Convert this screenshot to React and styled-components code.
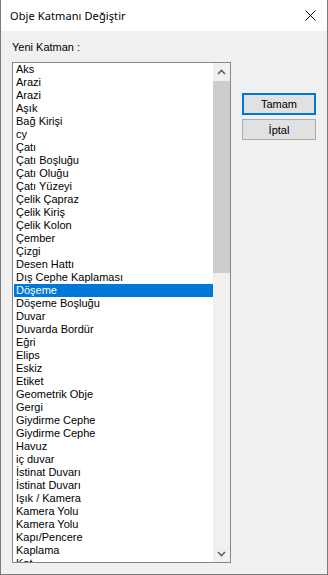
import React from "react"
import styled, { createGlobalStyle } from "styled-components"

const GlobalStyle = createGlobalStyle`
  html, body {
    margin: 0;
    padding: 0;
    background: #f0f0f0;
  }
`

const items = [
  "Aks",
  "Arazi",
  "Arazi",
  "Aşık",
  "Bağ Kirişi",
  "cy",
  "Çatı",
  "Çatı Boşluğu",
  "Çatı Oluğu",
  "Çatı Yüzeyi",
  "Çelik Çapraz",
  "Çelik Kiriş",
  "Çelik Kolon",
  "Çember",
  "Çizgi",
  "Desen Hattı",
  "Dış Cephe Kaplaması",
  "Döşeme",
  "Döşeme Boşluğu",
  "Duvar",
  "Duvarda Bordür",
  "Eğri",
  "Elips",
  "Eskiz",
  "Etiket",
  "Geometrik Obje",
  "Gergi",
  "Giydirme Cephe",
  "Giydirme Cephe",
  "Havuz",
  "iç duvar",
  "İstinat Duvarı",
  "İstinat Duvarı",
  "Işık / Kamera",
  "Kamera Yolu",
  "Kamera Yolu",
  "Kapı/Pencere",
  "Kaplama",
  "Kat",
]

const Window = styled.div`
  width: 328px;
  height: 575px;
  box-sizing: border-box;
  border: 1px solid #7a7a7a;
  border-top: none;
  background: #f0f0f0;
  display: flex;
  flex-direction: column;
  overflow: hidden;
`

const TitleBar = styled.div`
  height: 31px;
  background: #ffffff;
  display: flex;
  align-items: center;
  justify-content: space-between;
  padding: 0 11px 0 9px;
  flex-shrink: 0;
`

const Title = styled.span`
  font-family: "Noto Sans", sans-serif;
  font-size: 11px;
  letter-spacing: 0.1px;
  color: #000;
`

const Body = styled.div`
  flex: 1;
  display: flex;
  gap: 11px;
  padding: 10px 0 0 11px;
`

const LeftColumn = styled.div`
  display: flex;
  flex-direction: column;
`

const Label = styled.div`
  font-family: "Liberation Sans", Arial, sans-serif;
  font-size: 11px;
  line-height: 13px;
  height: 21px;
  color: #000;
`

const ListBox = styled.div`
  width: 219px;
  height: 501px;
  box-sizing: border-box;
  border: 1px solid #828790;
  background: #fff;
  display: flex;
`

const Items = styled.div`
  width: 200px;
  overflow: hidden;
  padding-left: 1px;
  box-sizing: border-box;
`

const Item = styled.div`
  height: 13px;
  line-height: 13px;
  padding-left: 2px;
  white-space: nowrap;
  font-family: "Liberation Sans", Arial, sans-serif;
  font-size: 11px;
  color: ${(p) => (p.selected ? "#fff" : "#000")};
  background: ${(p) => (p.selected ? "#0078d7" : "transparent")};
`

const ScrollBar = styled.div`
  width: 17px;
  background: #f0f0f0;
  display: flex;
  flex-direction: column;
`

const Arrow = styled.div`
  height: 17px;
  display: flex;
  align-items: center;
  justify-content: center;
`

const Track = styled.div`
  flex: 1;
  padding-top: 1px;
`

const Thumb = styled.div`
  height: 192px;
  background: #cdcdcd;
`

const Buttons = styled.div`
  display: flex;
  flex-direction: column;
  gap: 4px;
  padding-top: 52px;
`

const Button = styled.div`
  width: 74px;
  height: ${(p) => (p.primary ? "22px" : "21px")};
  box-sizing: border-box;
  border: ${(p) => (p.primary ? "2px solid #0078d7" : "1px solid #adadad")};
  background: #e1e1e1;
  display: flex;
  align-items: center;
  justify-content: center;
  font-family: "Liberation Sans", Arial, sans-serif;
  font-size: 11px;
  color: #000;
`

const Chevron = ({ up }) => (
  <svg width="9" height="6" viewBox="0 0 9 6">
    <path
      d={up ? "M1 5 L4.5 1.5 L8 5" : "M1 1 L4.5 4.5 L8 1"}
      fill="none"
      stroke="#606060"
      strokeWidth="1.6"
    />
  </svg>
)

export default function App() {
  return (
    <>
      <GlobalStyle />
      <Window>
        <TitleBar>
          <Title>Obje Katmanı Değiştir</Title>
          <svg width="11" height="11" viewBox="0 0 11 11">
            <path d="M0.5 0.5 L10.5 10.5 M10.5 0.5 L0.5 10.5" stroke="#000" strokeWidth="1" />
          </svg>
        </TitleBar>
        <Body>
          <LeftColumn>
            <Label>Yeni Katman :</Label>
            <ListBox>
              <Items>
                {items.map((name, i) => (
                  <Item key={i} selected={name === "Döşeme"}>
                    {name}
                  </Item>
                ))}
              </Items>
              <ScrollBar>
                <Arrow>
                  <Chevron up />
                </Arrow>
                <Track>
                  <Thumb />
                </Track>
                <Arrow>
                  <Chevron />
                </Arrow>
              </ScrollBar>
            </ListBox>
          </LeftColumn>
          <Buttons>
            <Button primary>Tamam</Button>
            <Button>İptal</Button>
          </Buttons>
        </Body>
      </Window>
    </>
  )
}
